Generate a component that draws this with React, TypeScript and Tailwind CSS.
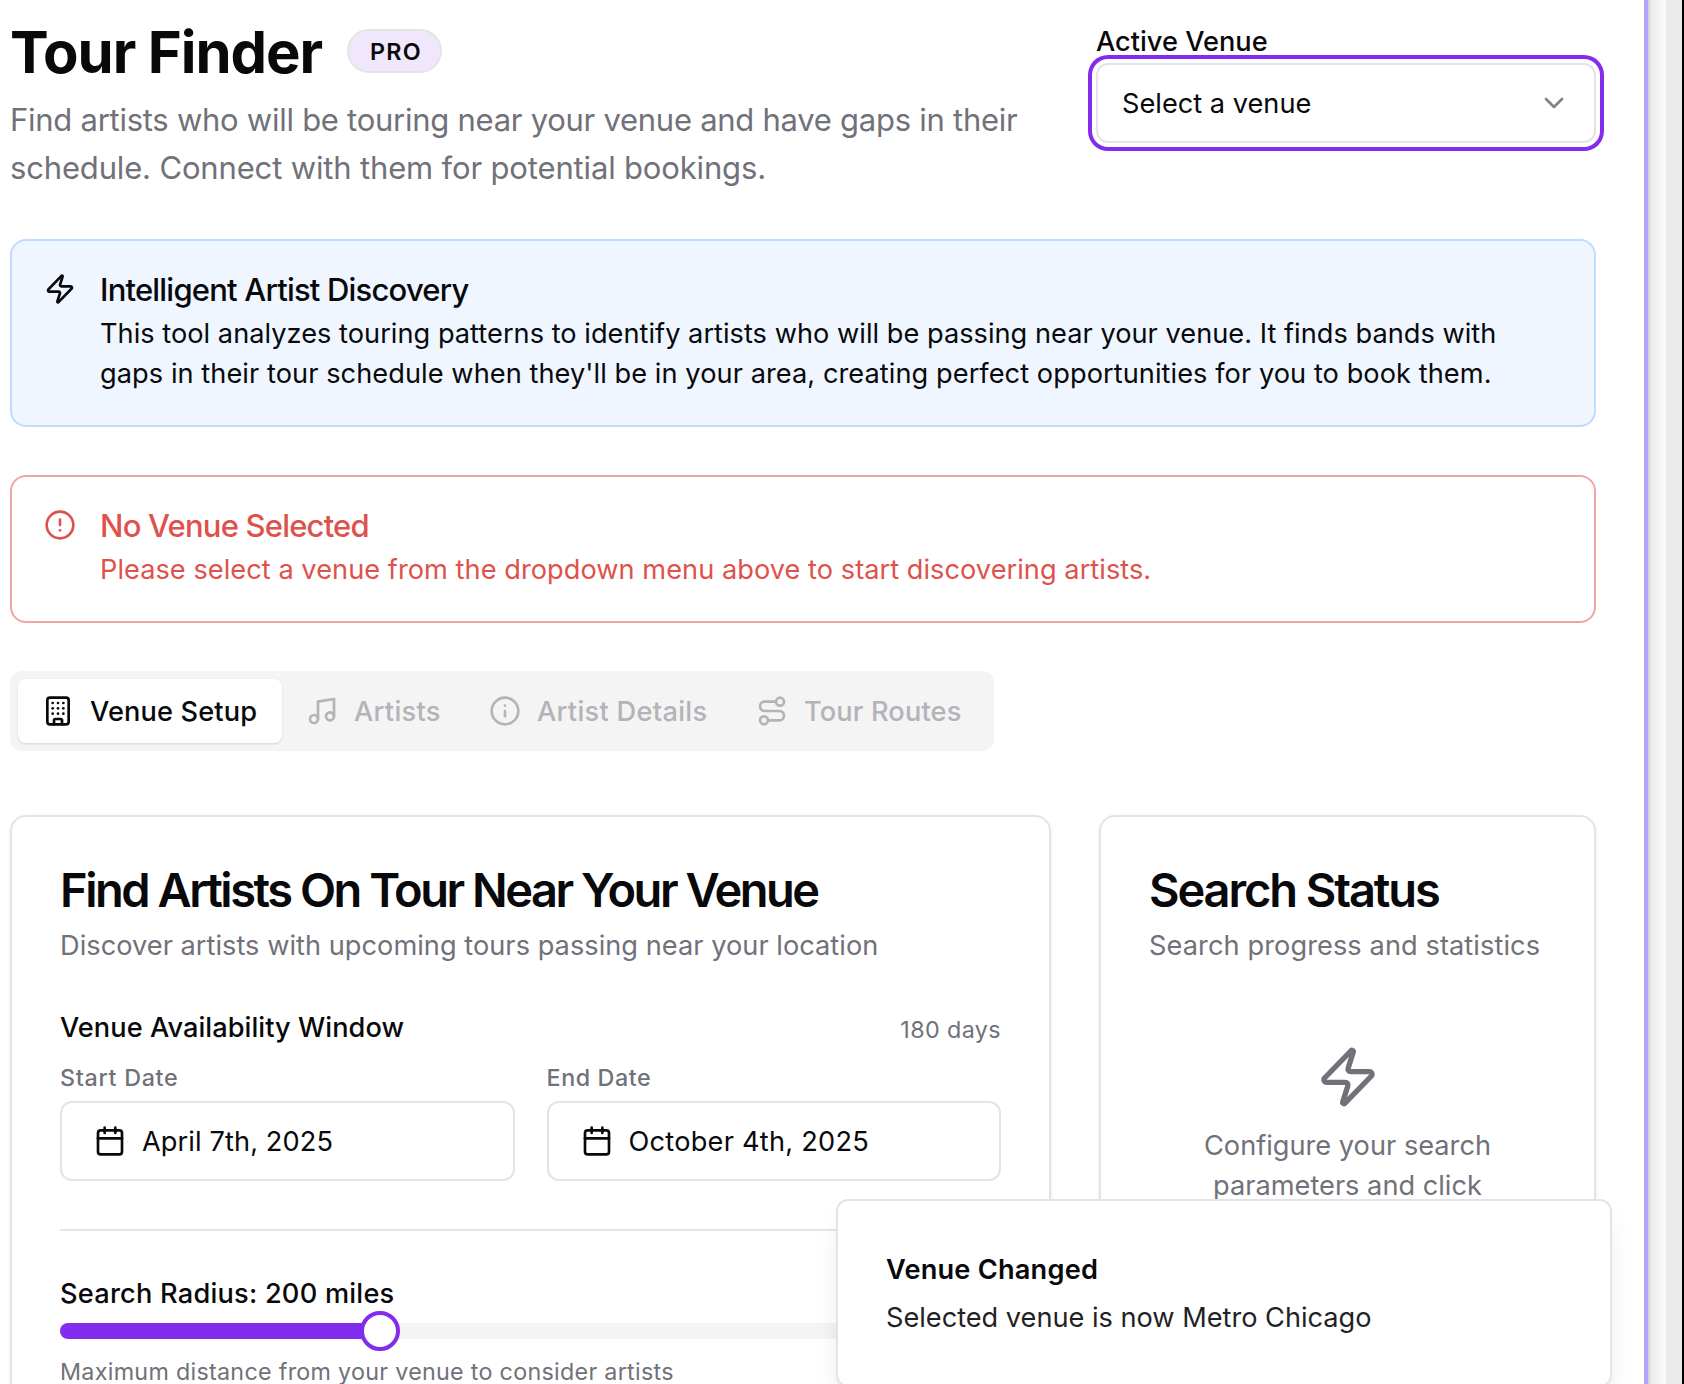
import React from 'react';
import { Building, Calendar, ChevronDown, CircleAlert, Info, Music, Route, Zap } from 'lucide-react';

function Alert({
  icon,
  title,
  className,
  children,
}: {
  icon: React.ReactNode;
  title: string;
  className: string;
  children: React.ReactNode;
}) {
  return (
    <div className={`flex gap-6 rounded-2xl border-2 p-8 ${className}`}>
      {icon}
      <div className="pt-px">
        <h5 className="mb-2 text-[31px] leading-8 font-medium tracking-[-0.8px] whitespace-nowrap">{title}</h5>
        <div className="text-[27.2px] leading-10 tracking-[0.035px] whitespace-nowrap">{children}</div>
      </div>
    </div>
  );
}

function DateField({
  label,
  value,
  labelTracking,
  valueTracking,
}: {
  label: string;
  value: string;
  labelTracking: string;
  valueTracking: string;
}) {
  return (
    <div className="min-w-0 flex-1">
      <div className={`pt-px text-[23.3px] leading-6 font-medium text-[#71717a] ${labelTracking}`}>{label}</div>
      <button className="mt-[11px] flex h-20 w-full items-center gap-4 rounded-xl border-2 border-[#e4e4e7] bg-white px-8">
        <Calendar size={32} className="shrink-0" />
        <span className={`pt-0.5 text-[27.2px] leading-10 whitespace-nowrap ${valueTracking}`}>{value}</span>
      </button>
    </div>
  );
}

export default function App() {
  return (
    <div className="relative flex h-[1384px] w-[1684px] overflow-hidden bg-white font-['Inter',sans-serif] text-[#09090b]">
      <main className="w-[1644px] shrink-0 pl-[10px] pr-12">
        <header className="flex h-[191px] items-start justify-between pt-[15px]">
          <div className="w-[1040px]">
            <div className="flex h-[72px] items-center">
              <h1 className="w-[337px] pt-0.5 text-[58px] leading-[72px] font-bold tracking-[-1.07px] whitespace-nowrap">
                Tour Finder
              </h1>
              <span className="flex h-11 w-[95px] items-center justify-center rounded-full border-2 border-[#e4e4e7] bg-[#f0e7fd] pt-0.5 pl-[3px] text-[23.3px] leading-8 font-semibold tracking-[1.3px]">
                PRO
              </span>
            </div>
            <p className="mt-[9px] text-[31px] leading-[48px] whitespace-nowrap text-[#71717a]">
              <span className="tracking-[-0.264px]">
                Find artists who will be touring near your venue and have gaps in their
              </span>
              <br />
              <span className="tracking-[-0.157px]">schedule. Connect with them for potential bookings.</span>
            </p>
          </div>
          <div className="w-[500px] pt-[13px]">
            <div className="text-[27.2px] leading-7 font-medium">Active Venue</div>
            <button className="mt-[7px] flex h-20 w-full items-center justify-between rounded-xl border-2 border-[#e4e4e7] bg-white px-6 ring-4 ring-[#832cef] ring-offset-4">
              <span className="pt-0.5 text-[27.2px] leading-10">Select a venue</span>
              <ChevronDown size={32} className="opacity-50" />
            </button>
          </div>
        </header>

        <Alert
          icon={<Zap size={32} className="shrink-0" />}
          title="Intelligent Artist Discovery"
          className="mt-12 h-[188px] border-[#bfdbfe] bg-[#eff6ff]"
        >
          <span className="tracking-[0.02px]">
            This tool analyzes touring patterns to identify artists who will be passing near your venue. It finds bands
            with
          </span>
          <br />
          <span className="tracking-[0.06px]">
            gaps in their tour schedule when they'll be in your area, creating perfect opportunities for you to book
            them.
          </span>
        </Alert>

        <Alert
          icon={<CircleAlert size={32} className="shrink-0" />}
          title="No Venue Selected"
          className="mt-12 h-[148px] border-[#eea6a4] bg-white text-[#de524c]"
        >
          Please select a venue from the dropdown menu above to start discovering artists.
        </Alert>

        <nav className="mt-12 flex h-20 w-[984px] rounded-xl bg-[#f4f4f5] p-2 text-[27.2px] leading-10 font-medium whitespace-nowrap text-[#b3b3b8]">
          <div className="flex w-[264px] items-center gap-4 rounded-lg bg-white pl-6 tracking-[0.13px] text-[#09090b] shadow-sm">
            <Building size={32} />
            <span className="pt-0.5">Venue Setup</span>
          </div>
          <div className="flex w-[183px] items-center gap-4 pl-6 tracking-[0.3px]">
            <Music size={32} />
            <span className="pt-0.5">Artists</span>
          </div>
          <div className="flex w-[267px] items-center gap-4 pl-6 tracking-[0.3px]">
            <Info size={32} />
            <span className="pt-0.5">Artist Details</span>
          </div>
          <div className="flex flex-1 items-center gap-4 pl-6 tracking-[0.15px]">
            <Route size={32} />
            <span className="pt-0.5">Tour Routes</span>
          </div>
        </nav>

        <div className="mt-16 flex gap-12">
          <section className="h-[800px] w-[1041px] rounded-2xl border-2 border-[#e4e4e7] p-12 shadow-sm">
            <h2 className="text-[47px] leading-[50px] font-semibold tracking-[-2.48px] whitespace-nowrap">
              Find Artists On Tour Near Your Venue
            </h2>
            <p className="mt-[11px] text-[27.2px] leading-10 tracking-[0.025px] text-[#71717a]">
              Discover artists with upcoming tours passing near your location
            </p>
            <div className="mt-[47px] flex h-10 items-start justify-between pt-px">
              <span className="text-[27.2px] leading-7 font-medium tracking-[0.04px]">Venue Availability Window</span>
              <span className="text-[23.3px] leading-8 tracking-[0.4px] text-[#71717a]">180 days</span>
            </div>
            <div className="mt-3 flex gap-8">
              <DateField
                label="Start Date"
                value="April 7th, 2025"
                labelTracking="tracking-[0.71px]"
                valueTracking="tracking-[0.1px]"
              />
              <DateField
                label="End Date"
                value="October 4th, 2025"
                labelTracking="tracking-[0.58px]"
                valueTracking="tracking-[0.24px]"
              />
            </div>
            <div className="mt-12 h-0.5 bg-[#e4e4e7]" />
            <div className="mt-[49px] text-[27.2px] leading-7 font-medium tracking-[0.22px]">
              Search Radius: 200 miles
            </div>
            <div className="relative mt-[3px] flex h-10 items-center">
              <div className="h-4 w-full overflow-hidden rounded-full bg-[#f4f4f5]">
                <div className="h-full w-[320px] bg-[#832cef]" />
              </div>
              <div className="absolute top-0 left-[300px] size-10 rounded-full border-4 border-[#832cef] bg-white" />
            </div>
            <p className="mt-[5px] text-[23.3px] leading-8 tracking-[0.286px] text-[#71717a]">
              Maximum distance from your venue to consider artists
            </p>
          </section>

          <section className="h-[800px] flex-1 rounded-2xl border-2 border-[#e4e4e7] p-12 shadow-sm">
            <h2 className="text-[47px] leading-[50px] font-semibold tracking-[-2.1px] whitespace-nowrap">
              Search Status
            </h2>
            <p className="mt-[11px] text-[27.2px] leading-10 tracking-[0.08px] whitespace-nowrap text-[#71717a]">
              Search progress and statistics
            </p>
            <div className="mt-[79px] flex flex-col items-center text-center text-[27.2px] leading-10 text-[#71717a]">
              <Zap size={64} className="mb-[17px]" />
              <p>
                Configure your search
                <br />
                parameters and click
              </p>
            </div>
          </section>
        </div>
      </main>

      <aside className="flex flex-1">
        <div className="w-1 bg-[#b1a5fb]" />
        <div className="w-0.5 bg-[#d6d6d8]" />
        <div className="w-4 bg-linear-to-r from-[#ebebeb] to-[#fafafa]" />
        <div className="w-4 bg-[#e9ebed]" />
        <div className="w-0.5 bg-black" />
      </aside>

      <div className="absolute top-[1199px] left-[836px] h-[188px] w-[776px] rounded-xl border-2 border-[#e4e4e7] bg-white px-12 pt-[49px] whitespace-nowrap shadow-[0_20px_30px_-6px_rgba(0,0,0,0.1),0_8px_12px_-8px_rgba(0,0,0,0.1)]">
        <div className="text-[27.2px] leading-10 font-semibold tracking-[0.2px]">Venue Changed</div>
        <div className="mt-2 text-[27.2px] leading-10 tracking-[-0.02px] opacity-90">
          Selected venue is now Metro Chicago
        </div>
      </div>
    </div>
  );
}
